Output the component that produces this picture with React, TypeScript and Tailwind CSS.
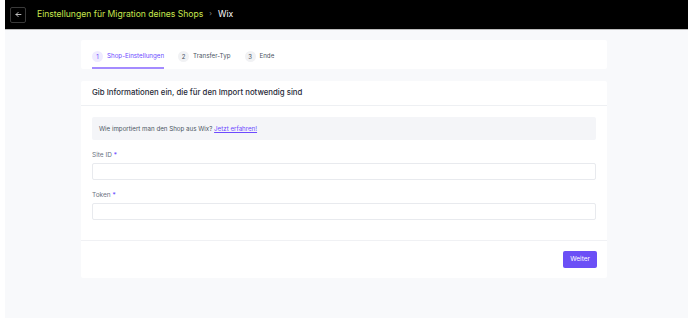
import React from 'react';

const steps = [
  { n: 1, label: 'Shop-Einstellungen', active: true },
  { n: 2, label: 'Transfer-Typ', active: false },
  { n: 3, label: 'Ende', active: false },
];

function Field({ label }: { label: string }) {
  return (
    <div className="flex flex-col gap-[3px]">
      <label className="text-[6.5px] leading-[9px] text-[#6b7280]">
        {label} <span className="text-[#6d4aff]">*</span>
      </label>
      <input className="h-[17px] w-full rounded-[2px] border border-[#e8eaee] bg-white" />
    </div>
  );
}

export default function App() {
  return (
    <div className="h-[318px] w-[688px] bg-white pl-[5px]" style={{ fontFamily: 'Inter, "Noto Sans", sans-serif' }}>
      <div className="flex h-full flex-col bg-[#f8f9fb]">
        <header className="flex h-[30px] shrink-0 items-center gap-[11px] border-b border-[#bdbdbd] bg-black pl-[5px]">
          <button className="flex h-[16px] w-[16px] items-center justify-center rounded-[2px] border border-[#3a3a3a] text-[#d0d0d0]">
            <svg width="7" height="7" viewBox="0 0 10 10" fill="none" stroke="currentColor" strokeWidth="1.3" strokeLinecap="round" strokeLinejoin="round">
              <path d="M8.5 5H1.5M4.5 2 1.5 5l3 3" />
            </svg>
          </button>
          <div className="flex items-center gap-[6px] text-[8.6px]">
            <span className="text-[#c8e64e]">Einstellungen für Migration deines Shops</span>
            <span className="text-[7px] text-[#8a8a8a]">›</span>
            <span className="text-white">Wix</span>
          </div>
        </header>

        <main className="ml-[76px] mt-[10px] flex w-[526px] flex-col gap-[12px]">
          <nav className="flex h-[29px] items-stretch gap-[14px] rounded-[2px] bg-white px-[11px]">
            {steps.map((s) => (
              <div
                key={s.n}
                className={`flex items-center gap-[4px] border-b-2 pt-[5px] ${s.active ? 'border-[#a48bff]' : 'border-transparent'}`}
              >
                <span
                  className={`flex h-[11px] w-[11px] items-center justify-center rounded-full text-[6px] ${s.active ? 'bg-[#efebff] text-[#6d4aff]' : 'bg-[#f1f2f4] text-[#4b5563]'}`}
                >
                  {s.n}
                </span>
                <span className={`text-[6.2px] ${s.active ? 'text-[#6d4aff]' : 'text-[#4b5563]'}`}>{s.label}</span>
              </div>
            ))}
          </nav>

          <section className="flex h-[197px] flex-col rounded-[2px] bg-white">
            <div className="flex h-[25px] items-center border-b border-[#eef0f3] px-[11px]">
              <h2 className="text-[7.8px] font-medium text-[#1f2937]">Gib Informationen ein, die für den Import notwendig sind</h2>
            </div>
            <div className="flex flex-col gap-[11px] px-[11px] pt-[11px]">
              <div className="flex h-[23px] items-center rounded-[2px] bg-[#f4f5f8] px-[7px] text-[6.2px] text-[#4b5563]">
                Wie importiert man den Shop aus Wix?&nbsp;
                <a className="text-[#6d4aff] underline">Jetzt erfahren!</a>
              </div>
              <Field label="Site ID" />
              <Field label="Token" />
            </div>
            <div className="mt-auto flex h-[38px] items-center justify-end border-t border-[#f0f1f4] px-[10px]">
              <button className="h-[17px] rounded-[2px] bg-[#6b4ff6] px-[7px] text-[6.5px] text-white">Weiter</button>
            </div>
          </section>
        </main>
      </div>
    </div>
  );
}
